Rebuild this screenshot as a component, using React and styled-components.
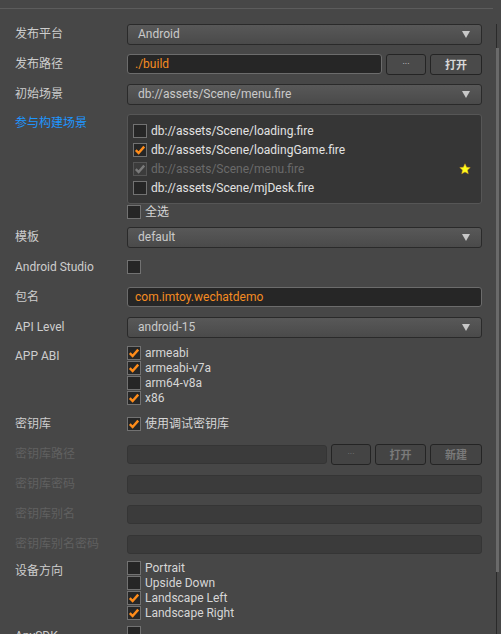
import React from "react";
import styled, { createGlobalStyle } from "styled-components";

const GlobalStyle = createGlobalStyle`
  html, body {
    margin: 0;
    padding: 0;
    background: #474747;
    overflow: hidden;
  }
  body {
    font-family: Roboto, "Noto Sans CJK SC", sans-serif;
    font-size: 12px;
    color: #cccccc;
  }
`;

const scenes = [
  { path: "db://assets/Scene/loading.fire", checked: false },
  { path: "db://assets/Scene/loadingGame.fire", checked: true },
  { path: "db://assets/Scene/menu.fire", checked: true, disabled: true, star: true },
  { path: "db://assets/Scene/mjDesk.fire", checked: false },
];

const abis = [
  { name: "armeabi", checked: true },
  { name: "armeabi-v7a", checked: true },
  { name: "arm64-v8a", checked: false },
  { name: "x86", checked: true },
];

const orientations = [
  { name: "Portrait", checked: false },
  { name: "Upside Down", checked: false },
  { name: "Landscape Left", checked: true },
  { name: "Landscape Right", checked: true },
];

function CheckBox({ checked, disabled }) {
  return (
    <Box disabled={disabled}>
      {checked && (
        <svg width="12" height="12" viewBox="0 0 12 12">
          <path
            d="M1.8 6.2 L4.6 9 L10.2 2.6"
            fill="none"
            stroke={disabled ? "#7a7a7a" : "#ff8c1a"}
            strokeWidth="2.4"
          />
        </svg>
      )}
    </Box>
  );
}

function Dropdown({ value }) {
  return (
    <Select>
      <span>{value}</span>
      <Arrow />
    </Select>
  );
}

export default function App() {
  return (
    <Page>
      <GlobalStyle />
      <Main>
        <TopLine />
        <Form>
          <Row>
            <Label>发布平台</Label>
            <Control>
              <Dropdown value="Android" />
            </Control>
          </Row>
          <Row>
            <Label>发布路径</Label>
            <Control>
              <TextInput>./build</TextInput>
              <Button wide={40}>···</Button>
              <Button wide={52} bold>打开</Button>
            </Control>
          </Row>
          <Row>
            <Label>初始场景</Label>
            <Control>
              <Dropdown value="db://assets/Scene/menu.fire" />
            </Control>
          </Row>
          <Row top pad="5px 0 3px">
            <Label offset={1} accent>参与构建场景</Label>
            <Column>
              <SceneList>
                {scenes.map((s) => (
                  <SceneItem key={s.path} disabled={s.disabled}>
                    <CheckBox checked={s.checked} disabled={s.disabled} />
                    <span>{s.path}</span>
                    {s.star && (
                      <Star width="12" height="12" viewBox="0 0 24 24">
                        <path
                          d="M12 1.5l3.2 7 7.3.7-5.5 5 1.6 7.4L12 17.8l-6.6 3.8 1.6-7.4-5.5-5 7.3-.7z"
                          fill="#ffff1a"
                          stroke="#d89a20"
                          strokeWidth="1"
                        />
                      </Star>
                    )}
                  </SceneItem>
                ))}
              </SceneList>
              <CheckLine>
                <CheckBox />
                <CheckText>全选</CheckText>
              </CheckLine>
            </Column>
          </Row>
          <Row>
            <Label>模板</Label>
            <Control>
              <Dropdown value="default" />
            </Control>
          </Row>
          <Row>
            <Label>Android Studio</Label>
            <Control>
              <CheckBox />
            </Control>
          </Row>
          <Row>
            <Label>包名</Label>
            <Control>
              <TextInput>com.imtoy.wechatdemo</TextInput>
            </Control>
          </Row>
          <Row>
            <Label>API Level</Label>
            <Control>
              <Dropdown value="android-15" />
            </Control>
          </Row>
          <Row top pad="4px 0 4px">
            <Label offset={2}>APP ABI</Label>
            <Column>
              {abis.map((a) => (
                <CheckLine key={a.name}>
                  <CheckBox checked={a.checked} />
                  <CheckText>{a.name}</CheckText>
                </CheckLine>
              ))}
            </Column>
          </Row>
          <Row>
            <Label>密钥库</Label>
            <Control>
              <CheckLine>
                <CheckBox checked />
                <CheckText>使用调试密钥库</CheckText>
              </CheckLine>
            </Control>
          </Row>
          <Row>
            <Label muted>密钥库路径</Label>
            <Control>
              <TextInput disabled />
              <Button wide={40} disabled>···</Button>
              <Button wide={51} bold disabled>打开</Button>
              <Button wide={52} bold disabled>新建</Button>
            </Control>
          </Row>
          <Row>
            <Label muted>密钥库密码</Label>
            <Control>
              <TextInput disabled />
            </Control>
          </Row>
          <Row>
            <Label muted>密钥库别名</Label>
            <Control>
              <TextInput disabled />
            </Control>
          </Row>
          <Row>
            <Label muted>密钥库别名密码</Label>
            <Control>
              <TextInput disabled />
            </Control>
          </Row>
          <Row top pad="2px 0 0">
            <Label offset={2}>设备方向</Label>
            <Column>
              {orientations.map((o) => (
                <CheckLine key={o.name}>
                  <CheckBox checked={o.checked} />
                  <CheckText>{o.name}</CheckText>
                </CheckLine>
              ))}
            </Column>
          </Row>
          <Row top pad="6px 0 0">
            <Label offset={2}>AnySDK</Label>
            <Column>
              <CheckBox />
            </Column>
          </Row>
        </Form>
      </Main>
      <ScrollBar>
        <Thumb />
      </ScrollBar>
    </Page>
  );
}

const Page = styled.div`
  display: flex;
  height: 634px;
  overflow: hidden;
`;

const Main = styled.div`
  width: 493px;
  flex-shrink: 0;
`;

const TopLine = styled.div`
  height: 1px;
  margin-top: 8px;
  background: #5c5c5c;
`;

const Form = styled.div`
  display: flex;
  flex-direction: column;
  padding: 10px 11px 0 15px;
`;

const Row = styled.div`
  display: flex;
  align-items: ${(p) => (p.top ? "flex-start" : "center")};
  min-height: ${(p) => (p.top ? "0" : "30px")};
  padding: ${(p) => p.pad || "0"};
`;

const Label = styled.div`
  width: 112px;
  flex-shrink: 0;
  line-height: 16px;
  white-space: nowrap;
  padding-top: ${(p) => p.offset || 0}px;
  color: ${(p) => (p.accent ? "#1e96ff" : p.muted ? "#606060" : "#cdcdcd")};
`;

const Control = styled.div`
  flex: 1;
  display: flex;
  align-items: center;
  gap: 4px;
`;

const Column = styled.div`
  flex: 1;
  display: flex;
  flex-direction: column;
  gap: 1px;
`;

const Select = styled.div`
  flex: 1;
  height: 21px;
  box-sizing: border-box;
  display: flex;
  align-items: center;
  justify-content: space-between;
  padding: 0 11px 0 10px;
  border: 1px solid #2a2a2a;
  border-radius: 3px;
  background: linear-gradient(#585858, #4a4a4a);
  color: #cacaca;
`;

const Arrow = styled.span`
  width: 0;
  height: 0;
  border-left: 4px solid transparent;
  border-right: 4px solid transparent;
  border-top: 7px solid #c8c8c8;
`;

const TextInput = styled.div`
  flex: 1;
  height: ${(p) => (p.disabled ? "19px" : "20px")};
  box-sizing: border-box;
  display: flex;
  align-items: center;
  padding: 0 7px;
  border: 1px solid ${(p) => (p.disabled ? "#353535" : "#6c6c6c")};
  border-radius: 3px;
  background: ${(p) => (p.disabled ? "#3b3b3b" : "#262626")};
  color: #f58c22;
  font-size: 12px;
`;

const Button = styled.div`
  width: ${(p) => p.wide}px;
  height: 21px;
  box-sizing: border-box;
  flex-shrink: 0;
  display: flex;
  align-items: center;
  justify-content: center;
  border: 1px solid #242424;
  border-radius: 3px;
  background: ${(p) => (p.disabled ? "#444444" : "#4a4a4a")};
  color: ${(p) => (p.disabled ? "#7a7a7a" : "#d8d8d8")};
  font-size: ${(p) => (p.bold ? "11px" : "9px")};
  font-weight: ${(p) => (p.bold ? 700 : 400)};
`;

const SceneList = styled.div`
  height: 90px;
  box-sizing: border-box;
  padding: 6px 10px 0 5px;
  border: 1px solid #565656;
  border-radius: 3px;
  background: #363636;
`;

const SceneItem = styled.div`
  display: flex;
  align-items: center;
  gap: 4px;
  height: 19px;
  color: ${(p) => (p.disabled ? "#6a6a6a" : "#e2e2e2")};
`;

const Star = styled.svg`
  margin-left: auto;
`;

const Box = styled.span`
  width: 14px;
  height: 14px;
  box-sizing: border-box;
  flex-shrink: 0;
  display: flex;
  align-items: center;
  justify-content: center;
  border: 1px solid ${(p) => (p.disabled ? "#555555" : "#727272")};
  background: ${(p) => (p.disabled ? "#3c3c3c" : "#262626")};
`;

const CheckLine = styled.div`
  display: flex;
  align-items: center;
  gap: 4px;
  height: 14px;
`;

const CheckText = styled.span`
  color: #d6d6d6;
  line-height: 14px;
`;

const ScrollBar = styled.div`
  width: 3px;
  margin: 24px 0 0 3px;
  border-left: 1px solid #2a2a2a;
  box-sizing: border-box;
  display: flex;
  flex-direction: column;
`;

const Thumb = styled.div`
  margin: 24px 0 0 -1px;
  width: 3px;
  height: 524px;
  background: #6a6a6a;
`;
